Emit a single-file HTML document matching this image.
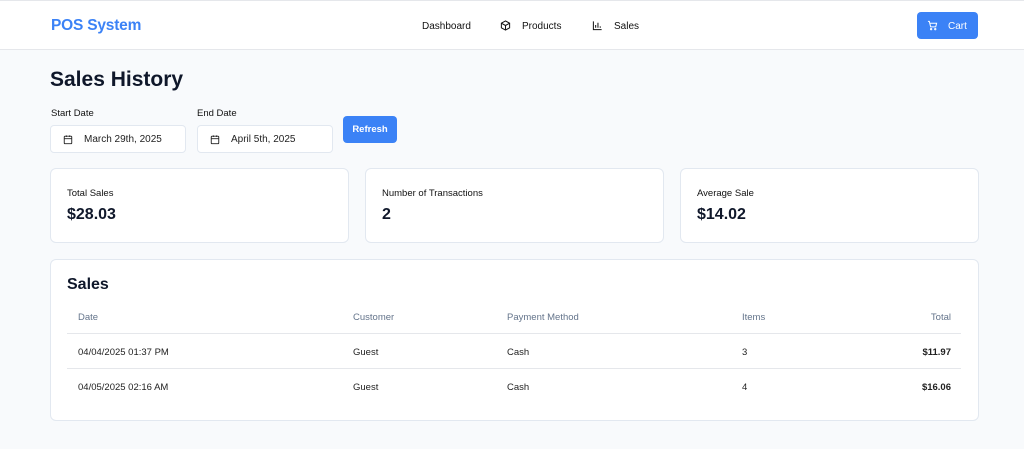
<!DOCTYPE html>
<html><head><meta charset="utf-8"><style>
*{box-sizing:border-box;margin:0;padding:0}
body{width:1024px;height:449px;background:#f8fafc;font-family:"Liberation Sans",sans-serif;color:#0f172a;position:relative;overflow:hidden}
.a{position:absolute}
header{position:absolute;left:0;top:0;width:1024px;height:50px;background:#fff;border-top:1px solid #e5e7eb;border-bottom:1px solid #e5e7eb}
.nav{font-size:10px;font-weight:500;color:#111}
.card{position:absolute;background:#fff;border:1px solid #e2e8f0;border-radius:6px}
.lbl{font-size:9.5px;color:#111}
.inp{position:absolute;top:125px;height:28px;background:#fff;border:1px solid #e2e8f0;border-radius:4px;font-size:10px;color:#222}
.inp span{position:absolute;left:33px;top:8px}
.inp svg{position:absolute;left:12px;top:8px}
.th{font-size:9.5px;color:#64748b;top:312px}
.td{font-size:9.5px;color:#222}
.hr{position:absolute;left:67px;width:894px;height:1px;background:#e5e7eb}
</style></head><body>
<header>
<div class="a" style="left:51px;top:16px;font-size:15.5px;font-weight:bold;color:#3b82f6;letter-spacing:-0.2px">POS System</div>
<div class="a nav" style="left:422px;top:20px">Dashboard</div>
<svg class="a" style="left:500px;top:19px" width="11" height="11" viewBox="0 0 24 24" fill="none" stroke="#111" stroke-width="2.2"><path d="M12 2l9 5v10l-9 5-9-5V7z"/><path d="M3 7l9 5 9-5M12 12v10"/></svg>
<div class="a nav" style="left:522px;top:20px">Products</div>
<svg class="a" style="left:592px;top:19px" width="11" height="11" viewBox="0 0 24 24" fill="none" stroke="#111" stroke-width="2.2"><path d="M3 3v18h18M8 17v-6M13 17V6M18 17v-3"/></svg>
<div class="a nav" style="left:614px;top:20px">Sales</div>
<div class="a" style="left:917px;top:11px;width:61px;height:27px;background:#3b82f6;border-radius:4px"></div>
<svg class="a" style="left:927px;top:19px" width="11" height="11" viewBox="0 0 24 24" fill="none" stroke="#fff" stroke-width="2.2"><path d="M2 3h3l3 12h11l2-8H6"/><circle cx="9" cy="20" r="1.5"/><circle cx="18" cy="20" r="1.5"/></svg>
<div class="a nav" style="left:948px;top:20px;color:#fff">Cart</div>
</header>
<div class="a" style="left:50px;top:68px;font-size:21px;font-weight:bold">Sales History</div>
<div class="a lbl" style="left:51px;top:108px;font-weight:500">Start Date</div>
<div class="a lbl" style="left:197px;top:108px;font-weight:500">End Date</div>
<div class="inp" style="left:50px;width:136px"><svg width="10" height="11" viewBox="0 0 24 24" fill="none" stroke="#222" stroke-width="2.2"><rect x="3" y="4" width="18" height="18" rx="2"/><path d="M3 10h18M8 2v4M16 2v4"/></svg><span>March 29th, 2025</span></div>
<div class="inp" style="left:197px;width:136px"><svg width="10" height="11" viewBox="0 0 24 24" fill="none" stroke="#222" stroke-width="2.2"><rect x="3" y="4" width="18" height="18" rx="2"/><path d="M3 10h18M8 2v4M16 2v4"/></svg><span>April 5th, 2025</span></div>
<div class="a" style="left:343px;top:116px;width:54px;height:27px;background:#3b82f6;border-radius:4px;color:#fff;font-size:9.5px;font-weight:bold;text-align:center;line-height:27px">Refresh</div>

<div class="card" style="left:50px;top:168px;width:299px;height:75px"></div>
<div class="card" style="left:365px;top:168px;width:299px;height:75px"></div>
<div class="card" style="left:680px;top:168px;width:299px;height:75px"></div>
<div class="a lbl" style="left:67px;top:188px">Total Sales</div>
<div class="a" style="left:67px;top:206px;font-size:16px;font-weight:bold">$28.03</div>
<div class="a lbl" style="left:382px;top:188px">Number of Transactions</div>
<div class="a" style="left:382px;top:206px;font-size:16px;font-weight:bold">2</div>
<div class="a lbl" style="left:697px;top:188px">Average Sale</div>
<div class="a" style="left:697px;top:206px;font-size:16px;font-weight:bold">$14.02</div>

<div class="card" style="left:50px;top:259px;width:929px;height:162px"></div>
<div class="a" style="left:67px;top:276px;font-size:16px;font-weight:bold">Sales</div>
<div class="a th" style="left:78px">Date</div>
<div class="a th" style="left:353px">Customer</div>
<div class="a th" style="left:507px">Payment Method</div>
<div class="a th" style="left:742px">Items</div>
<div class="a th" style="left:910px;width:41px;text-align:right">Total</div>
<div class="hr" style="top:333px"></div>
<div class="hr" style="top:368px"></div>
<div class="a td" style="left:78px;top:347px">04/04/2025 01:37 PM</div>
<div class="a td" style="left:353px;top:347px">Guest</div>
<div class="a td" style="left:507px;top:347px">Cash</div>
<div class="a td" style="left:742px;top:347px">3</div>
<div class="a td" style="left:900px;width:51px;text-align:right;top:347px;font-weight:bold">$11.97</div>
<div class="a td" style="left:78px;top:382px">04/05/2025 02:16 AM</div>
<div class="a td" style="left:353px;top:382px">Guest</div>
<div class="a td" style="left:507px;top:382px">Cash</div>
<div class="a td" style="left:742px;top:382px">4</div>
<div class="a td" style="left:900px;width:51px;text-align:right;top:382px;font-weight:bold">$16.06</div>
</body></html>
